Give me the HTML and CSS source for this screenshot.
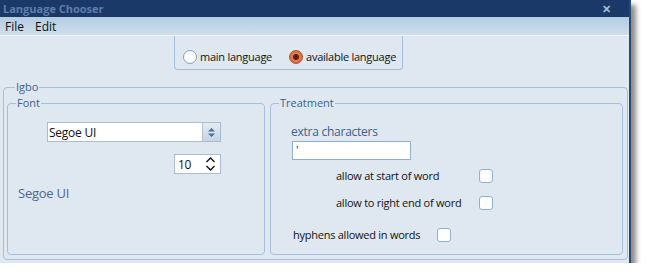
FILE: index.html
```html
<!DOCTYPE html>
<html lang="en">
<head>
    <meta charset="UTF-8">
    <title>Language Chooser</title>
    <link rel="stylesheet" href="styles.css">
</head>
<body>
    <div class="window">
        <div class="title-bar">
            <span class="title">Language Chooser</span>
            <span class="close">&#x2715;</span>
        </div>
        <div class="menu-bar">
            <span class="menu-item">File</span>
            <span class="menu-item">Edit</span>
        </div>

        <div class="content">
            <div class="mode-box">
                <label class="radio-option"><span class="radio"></span>main language</label>
                <label class="radio-option"><span class="radio checked"></span>available language</label>
            </div>

            <fieldset class="group outer-group">
                <legend>Igbo</legend>
                <div class="group-row">
                    <fieldset class="group font-group">
                        <legend>Font</legend>
                        <div class="combo">
                            <span class="combo-text">Segoe UI</span>
                            <span class="combo-button">
                                <svg width="9" height="11" viewBox="0 0 9 11"><path d="M4.5 1 L8 4.5 H1 Z M1 6.5 H8 L4.5 10 Z" fill="#4d6f98"/></svg>
                            </span>
                        </div>
                        <div class="numeric">
                            <span class="numeric-text">10</span>
                            <svg class="numeric-arrows" width="11" height="16" viewBox="0 0 11 16"><path d="M1.5 6 L5.5 2 L9.5 6 M1.5 10 L5.5 14 L9.5 10" fill="none" stroke="#111" stroke-width="1.4"/></svg>
                        </div>
                        <div class="font-preview">Segoe UI</div>
                    </fieldset>

                    <fieldset class="group treatment-group">
                        <legend>Treatment</legend>
                        <div class="field-label">extra characters</div>
                        <div class="text-input">'</div>
                        <div class="check-row first">
                            <span class="check-label">allow at start of word</span>
                            <span class="checkbox"></span>
                        </div>
                        <div class="check-row second">
                            <span class="check-label">allow to right end of word</span>
                            <span class="checkbox"></span>
                        </div>
                        <div class="check-row hyphens">
                            <span class="check-label">hyphens allowed in words</span>
                            <span class="checkbox"></span>
                        </div>
                    </fieldset>
                </div>
            </fieldset>
        </div>
    </div>
</body>
</html>
```

FILE: styles.css
```css
body {
    margin: 0;
    background-color: #ffffff;
    font-family: 'Open Sans', 'Noto Sans', Arial, sans-serif;
    font-size: 11px;
    letter-spacing: -0.25px;
}
.window {
    width: 629px;
    height: 263px;
    background-color: #dfe8f1;
    border-right: 2px solid #23487a;
    box-shadow: 5px 5px 5px rgba(0, 0, 0, 0.45);
    overflow: hidden;
}
.title-bar {
    height: 17px;
    background-color: #1b3968;
    display: flex;
    align-items: center;
    justify-content: space-between;
    padding: 0 20px 0 3px;
    margin-right: -2px;
}
.title {
    color: #607ea8;
    font-weight: bold;
    font-size: 11px;
    letter-spacing: 0;
}
.close {
    color: #a9bdd6;
    font-weight: bold;
    font-size: 11px;
}
.menu-bar {
    height: 18px;
    background: linear-gradient(#b4cde2, #cfdeeb);
    border-bottom: 1px solid #f2f6fa;
    display: flex;
    align-items: center;
    padding-left: 5px;
    gap: 11px;
}
.menu-item {
    color: #111;
    font-size: 12px;
    letter-spacing: 0;
}

.mode-box {
    margin-left: 174px;
    width: 229px;
    height: 34px;
    border: 1px solid #a6c0db;
    border-top: none;
    border-radius: 0 0 4px 4px;
    display: flex;
    align-items: flex-end;
    padding: 0 0 5px 8px;
    gap: 17px;
    box-sizing: border-box;
}
.radio-option {
    display: flex;
    align-items: center;
    gap: 3px;
    color: #111;
}
.radio {
    width: 14px;
    height: 14px;
    border-radius: 50%;
    border: 1px solid #8c9fb6;
    background: radial-gradient(#ffffff 60%, #e8eef5);
    box-sizing: border-box;
}
.radio.checked {
    border-color: #b4542e;
    background: radial-gradient(circle, #5a2210 0, #5a2210 2.5px, #e87d55 3.5px, #d8653c 6px);
}

.group {
    margin: 0;
    padding: 0;
    min-width: 0;
    border: 1px solid #a6c0db;
    border-radius: 4px;
}
.group legend {
    color: #3d5f8a;
    font-size: 11px;
    line-height: 14px;
    padding: 0 1px;
    margin-left: 8px;
    letter-spacing: 0;
}
.outer-group {
    margin: 10px 0 0 3px;
    width: 625px;
    height: 180px;
    box-sizing: border-box;
    padding: 2px 4px 2px 3px;
}
.group-row {
    display: flex;
    gap: 5px;
}
.font-group {
    width: 258px;
    height: 159px;
    box-sizing: border-box;
}
.treatment-group {
    width: 353px;
    height: 159px;
    box-sizing: border-box;
}

.combo {
    margin: 12px 0 0 39px;
    width: 174px;
    height: 20px;
    box-sizing: border-box;
    background-color: #ffffff;
    border: 1px solid #a8bdd3;
    display: flex;
    align-items: center;
    justify-content: space-between;
}
.combo-text {
    color: #111;
    font-size: 12px;
    padding-left: 1px;
}
.combo-button {
    width: 17px;
    height: 18px;
    background: linear-gradient(#e4ebf3, #c6d4e2);
    border-left: 1px solid #b6c6d8;
    display: flex;
    align-items: center;
    justify-content: center;
}
.numeric {
    margin: 12px 0 0 166px;
    width: 47px;
    height: 20px;
    box-sizing: border-box;
    background-color: #ffffff;
    border: 1px solid #a8bdd3;
    display: flex;
    align-items: center;
    justify-content: space-between;
    padding: 0 4px 0 3px;
}
.numeric-text {
    color: #111;
    font-size: 12px;
}
.font-preview {
    margin: 10px 0 0 10px;
    color: #4d6a8c;
    font-size: 13px;
}

.field-label {
    margin: 13px 0 0 20px;
    color: #3d5f8a;
    font-size: 12px;
}
.text-input {
    margin: 1px 0 0 21px;
    width: 119px;
    height: 19px;
    box-sizing: border-box;
    background-color: #ffffff;
    border: 1px solid #8fb0d2;
    color: #1a1a8a;
    font-size: 11px;
    line-height: 15px;
    padding-left: 3px;
}
.check-row {
    display: flex;
    align-items: center;
    height: 15px;
    color: #111;
}
.check-row.first {
    margin-top: 8px;
    margin-left: 65px;
}
.check-row.second {
    margin-top: 12px;
    margin-left: 65px;
}
.check-row.first .check-label,
.check-row.second .check-label {
    width: 143px;
}
.check-row.hyphens {
    margin-top: 17px;
    margin-left: 22px;
}
.check-row.hyphens .check-label {
    width: 144px;
}
.checkbox {
    width: 14px;
    height: 14px;
    box-sizing: border-box;
    background-color: #ffffff;
    border: 1px solid #8fb0d2;
    border-radius: 3px;
}
```
